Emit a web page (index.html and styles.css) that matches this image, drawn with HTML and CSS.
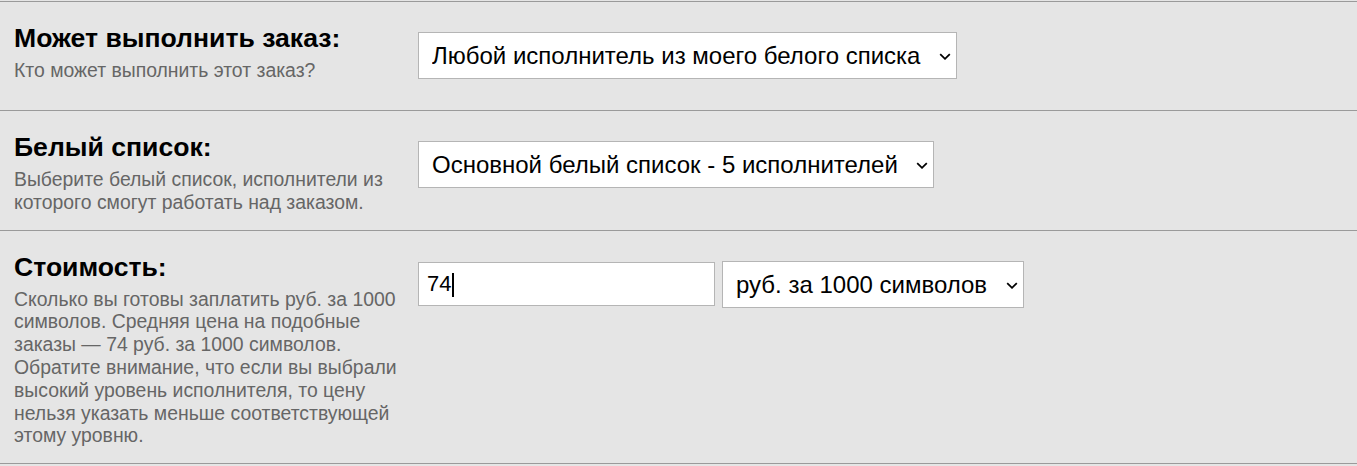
FILE: index.html
```html
<!DOCTYPE html>
<html lang="ru">
<head>
    <meta charset="UTF-8">
    <meta name="viewport" content="width=device-width, initial-scale=1.0">
    <title>Параметры заказа</title>
    <link rel="stylesheet" href="styles.css">
</head>
<body>
    <div class="form">
        <div class="row">
            <div class="label">
                <h3>Может выполнить заказ:</h3>
                <p>Кто может выполнить этот заказ?</p>
            </div>
            <div class="field">
                <span class="select-wrap">
                    <select class="select">
                        <option>Любой исполнитель из моего белого списка</option>
                        <option>Любой исполнитель</option>
                    </select>
                    <svg class="chevron" width="12" height="7" viewBox="0 0 12 7"><path d="M1.2 1.2L6 5.8l4.8-4.6"/></svg>
                </span>
            </div>
        </div>

        <div class="row">
            <div class="label">
                <h3>Белый список:</h3>
                <p>Выберите белый список, исполнители из которого смогут работать над заказом.</p>
            </div>
            <div class="field">
                <span class="select-wrap">
                    <select class="select">
                        <option>Основной белый список - 5 исполнителей</option>
                    </select>
                    <svg class="chevron" width="12" height="7" viewBox="0 0 12 7"><path d="M1.2 1.2L6 5.8l4.8-4.6"/></svg>
                </span>
            </div>
        </div>

        <div class="row">
            <div class="label">
                <h3>Стоимость:</h3>
                <p>Сколько вы готовы заплатить руб. за 1000 символов. Средняя цена на подобные заказы — 74 руб. за 1000 символов. Обратите внимание, что если вы выбрали высокий уровень исполнителя, то цену нельзя указать меньше соответствующей этому уровню.</p>
            </div>
            <div class="field">
                <span class="input-wrap">
                    <input class="price" type="text" value="74">
                    <span class="caret"></span>
                </span>
                <span class="select-wrap">
                    <select class="select">
                        <option>руб. за 1000 символов</option>
                        <option>руб. за заказ</option>
                    </select>
                    <svg class="chevron" width="12" height="7" viewBox="0 0 12 7"><path d="M1.2 1.2L6 5.8l4.8-4.6"/></svg>
                </span>
            </div>
        </div>
    </div>
</body>
</html>
```

FILE: styles.css
```css
body {
    margin: 0;
    padding: 0;
    background: #e5e5e5;
    font-family: 'Liberation Sans', Arial, sans-serif;
    color: #000;
}

.form {
    border-top: 1px solid #9a9a9a;
    margin-top: 1px;
}

.row {
    display: flex;
    gap: 14px;
    padding: 21px 14px 16px;
    border-bottom: 1px solid #9a9a9a;
}

.label {
    width: 390px;
    flex-shrink: 0;
}

.label h3 {
    margin: 0 0 6px;
    font-size: 26.6px;
    line-height: 30px;
    font-weight: bold;
}

.label p {
    margin: 0;
    font-size: 19.4px;
    line-height: 22.8px;
    color: #666;
}

.field {
    display: flex;
    align-items: center;
    gap: 7px;
    align-self: flex-start;
    margin: 9px 0 15px;
}

.select-wrap,
.input-wrap {
    position: relative;
    display: inline-flex;
}

.select {
    -webkit-appearance: none;
    appearance: none;
    font-family: inherit;
    font-size: 24px;
    line-height: 27px;
    color: #000;
    background: #fff;
    border: 1px solid #b5b5b5;
    border-radius: 0;
    padding: 9px 35px 9px 13px;
    height: 47px;
    box-sizing: border-box;
    outline: none;
}

.chevron {
    position: absolute;
    right: 6px;
    top: 21px;
    pointer-events: none;
}

.chevron path {
    fill: none;
    stroke: #000;
    stroke-width: 1.8;
}

.price {
    font-family: inherit;
    font-size: 22px;
    color: #000;
    background: #fff;
    border: 1px solid #b5b5b5;
    border-radius: 0;
    padding: 0 8px;
    width: 297px;
    height: 44px;
    box-sizing: border-box;
    outline: none;
}

.caret {
    position: absolute;
    left: 34px;
    top: 11px;
    width: 2px;
    height: 24px;
    background: #000;
    pointer-events: none;
}
```
